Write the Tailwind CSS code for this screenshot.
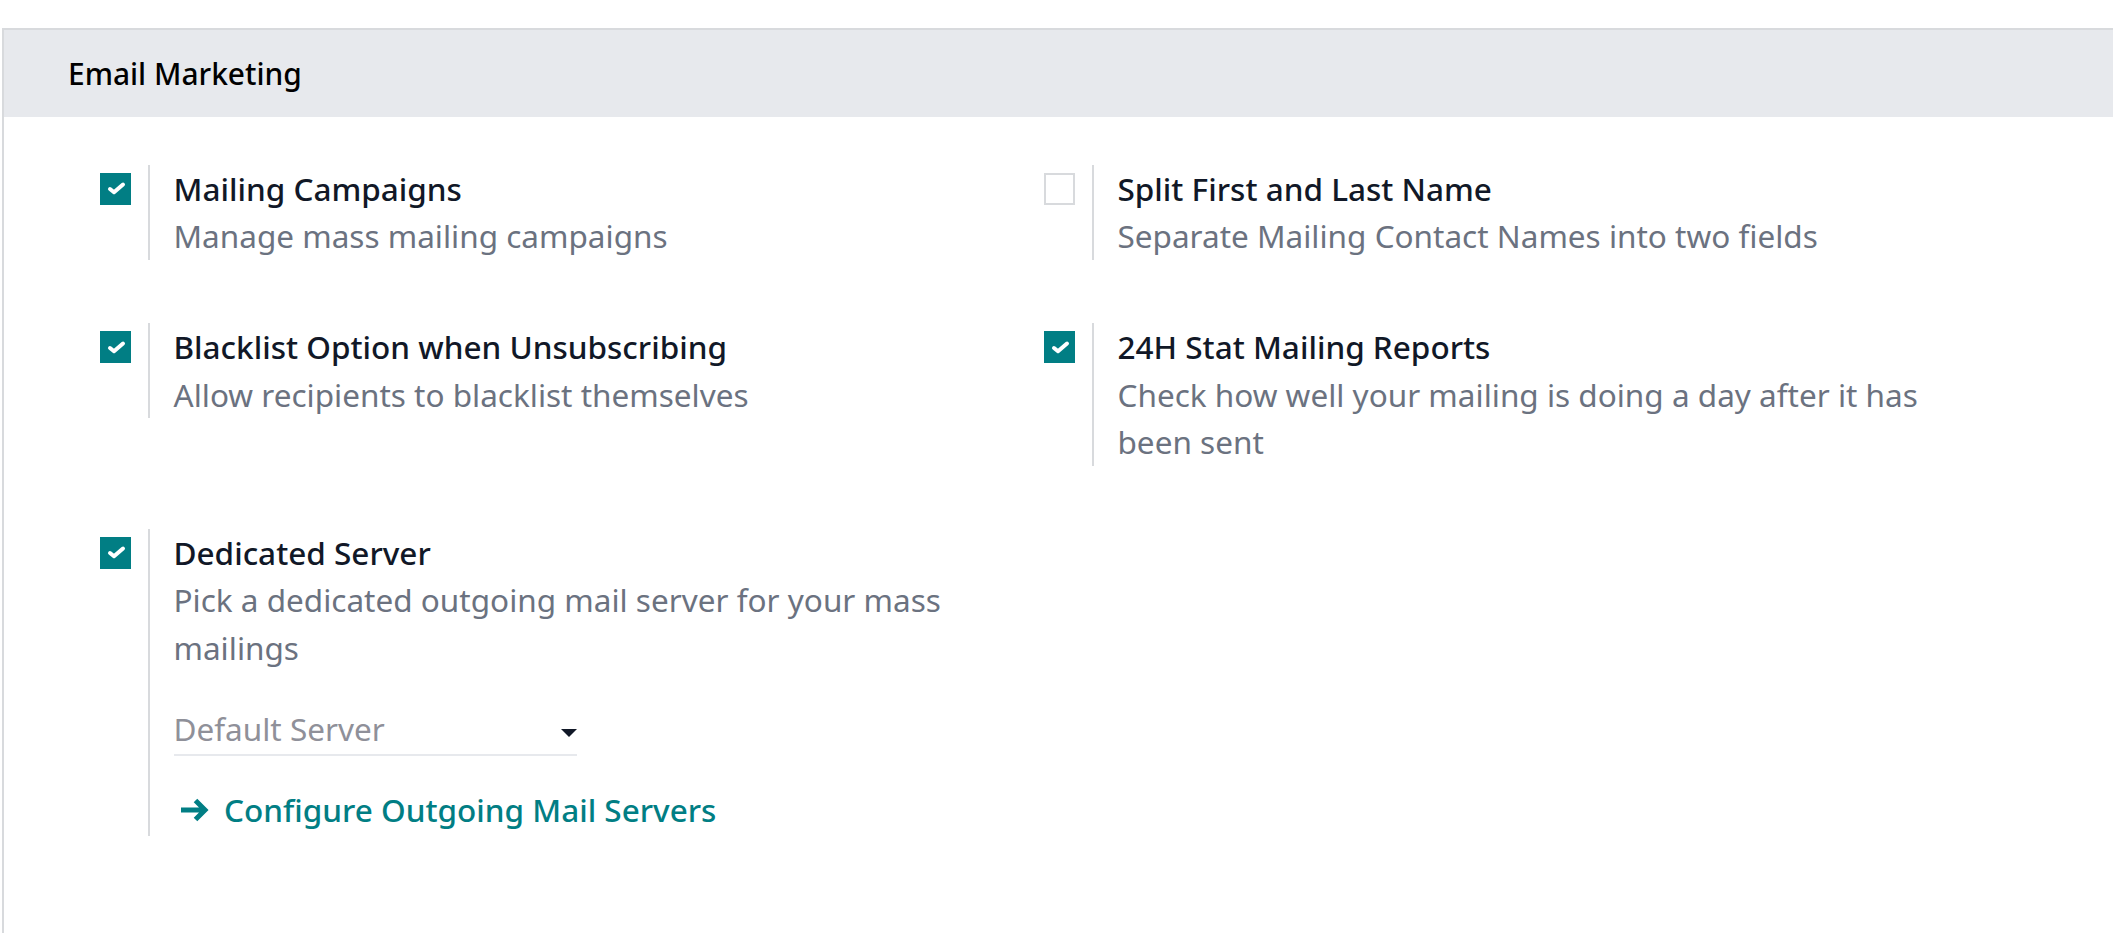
<!DOCTYPE html>
<html lang="en">
<head>
  <meta charset="UTF-8" />
  <title>Email Marketing</title>
  <script src="https://cdn.jsdelivr.net/npm/@tailwindcss/browser@4"></script>
</head>
<body class="bg-white font-['Noto_Sans',sans-serif] overflow-hidden">
  <div class="h-[933px] pt-[28px]">
    <div class="h-full border-t-2 border-l-2 border-[#d8dadd] ml-[2px]">
      <!-- Header -->
      <div class="h-[87px] bg-[#e7e9ed] flex items-center pl-[64px]">
        <h2 class="text-[29.9px] font-medium text-[#000] leading-none">Email Marketing</h2>
      </div>

      <!-- Settings -->
      <div class="grid grid-cols-[944px_944px] gap-y-[63.5px] pl-[96px] pt-[48px] items-start">
        <div class="flex">
          <div class="w-[48px] shrink-0 pt-[8px]">
            <span class="w-[31px] h-[31.5px] bg-[#017e84] flex items-center justify-center">
              <svg class="w-[31px] h-[31px]" viewBox="0 0 31 31" fill="none" stroke="#fff" stroke-width="4" stroke-linecap="round" stroke-linejoin="round"><path d="M10 16l4 3.3 9-7.8"/></svg>
            </span>
          </div>
          <div class="border-l-2 border-[#d8dadd] pl-[23.5px] w-[851px] text-[31.5px] leading-[47.4px]">
            <div class="font-medium text-[#111827]">Mailing Campaigns</div>
            <div class="text-[#6b7280]">Manage mass mailing campaigns</div>
          </div>
        </div>
        <div class="flex">
          <div class="w-[48px] shrink-0 pt-[8px]">
            <span class="block w-[31px] h-[31.5px] border-2 border-[#d8dadd] bg-white"></span>
          </div>
          <div class="border-l-2 border-[#d8dadd] pl-[23.5px] w-[851px] text-[31.5px] leading-[47.4px]">
            <div class="font-medium text-[#111827]">Split First and Last Name</div>
            <div class="text-[#6b7280]">Separate Mailing Contact Names into two fields</div>
          </div>
        </div>

        <div class="flex">
          <div class="w-[48px] shrink-0 pt-[8px]">
            <span class="w-[31px] h-[31.5px] bg-[#017e84] flex items-center justify-center">
              <svg class="w-[31px] h-[31px]" viewBox="0 0 31 31" fill="none" stroke="#fff" stroke-width="4" stroke-linecap="round" stroke-linejoin="round"><path d="M10 16l4 3.3 9-7.8"/></svg>
            </span>
          </div>
          <div class="border-l-2 border-[#d8dadd] pl-[23.5px] w-[851px] text-[31.5px] leading-[47.4px]">
            <div class="font-medium text-[#111827]">Blacklist Option when Unsubscribing</div>
            <div class="text-[#6b7280]">Allow recipients to blacklist themselves</div>
          </div>
        </div>
        <div class="flex">
          <div class="w-[48px] shrink-0 pt-[8px]">
            <span class="w-[31px] h-[31.5px] bg-[#017e84] flex items-center justify-center">
              <svg class="w-[31px] h-[31px]" viewBox="0 0 31 31" fill="none" stroke="#fff" stroke-width="4" stroke-linecap="round" stroke-linejoin="round"><path d="M10 16l4 3.3 9-7.8"/></svg>
            </span>
          </div>
          <div class="border-l-2 border-[#d8dadd] pl-[23.5px] w-[851px] text-[31.5px] leading-[47.4px]">
            <div class="font-medium text-[#111827]">24H Stat Mailing Reports</div>
            <div class="text-[#6b7280]">Check how well your mailing is doing a day after it has been sent</div>
          </div>
        </div>

        <div class="flex">
          <div class="w-[48px] shrink-0 pt-[8px]">
            <span class="w-[31px] h-[31.5px] bg-[#017e84] flex items-center justify-center">
              <svg class="w-[31px] h-[31px]" viewBox="0 0 31 31" fill="none" stroke="#fff" stroke-width="4" stroke-linecap="round" stroke-linejoin="round"><path d="M10 16l4 3.3 9-7.8"/></svg>
            </span>
          </div>
          <div class="border-l-2 border-[#d8dadd] pl-[23.5px] w-[851px] text-[31.5px] leading-[47.4px] pb-[2px]">
            <div class="font-medium text-[#111827]">Dedicated Server</div>
            <div class="text-[#6b7280]">Pick a dedicated outgoing mail server for your mass mailings</div>
            <div class="w-[403px] mt-[36px] h-[49px] pb-[5px] border-b-2 border-[#e7e9ed] flex items-center justify-between">
              <span class="text-[#8f9099]">Default Server</span>
              <span class="w-0 h-0 border-x-[8px] border-x-transparent border-t-[8px] border-t-[#111827] mt-[9px]"></span>
            </div>
            <a class="flex items-center mt-[30px] text-[#017e84] font-medium">
              <svg class="w-[28px] h-[24px] ml-[7px] mr-[15.5px]" viewBox="0 0 28 24" fill="none" stroke="#017e84" stroke-width="5" stroke-linejoin="miter"><path d="M0 12h24M14.5 2.5l9.5 9.5-9.5 9.5"/></svg>
              Configure Outgoing Mail Servers
            </a>
          </div>
        </div>
      </div>
    </div>
  </div>
</body>
</html>
